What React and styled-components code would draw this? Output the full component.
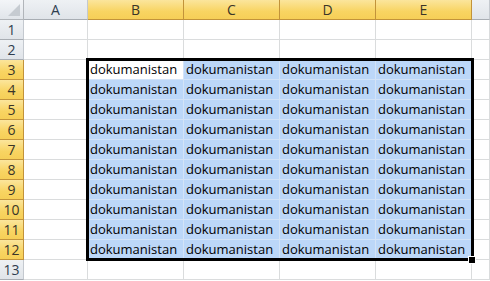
import React from 'react';
import styled, { createGlobalStyle } from 'styled-components';

const GlobalStyle = createGlobalStyle`
  html, body {
    margin: 0;
    padding: 0;
    background: #ffffff;
  }
  * {
    box-sizing: border-box;
  }
`;

const Sheet = styled.div`
  position: relative;
  display: grid;
  grid-template-columns: 24px 64px repeat(4, 96px) 1fr;
  grid-auto-rows: 20px;
  width: 490px;
  font-family: "Open Sans", "Liberation Sans", sans-serif;
  overflow: hidden;
`;

const Corner = styled.div`
  position: relative;
  background: linear-gradient(#f3f5f8, #e1e5ea);
  border-right: 1px solid #b1b5ba;
  border-bottom: 1px solid #b1b5ba;

  &::after {
    content: '';
    position: absolute;
    right: 3px;
    bottom: 3px;
    width: 0;
    height: 0;
    border-left: 12px solid transparent;
    border-bottom: 12px solid #c6cbd1;
  }
`;

const Head = styled.div`
  display: flex;
  align-items: center;
  justify-content: center;
  font-size: 14px;
  color: ${(p) => (p.$hl ? '#3a3528' : '#2f3d4f')};
  background: ${(p) =>
    p.$hl
      ? 'linear-gradient(#fbe59c, #f8d462 60%, #f6cf57)'
      : 'linear-gradient(#eef1f4, #e0e4e9)'};
  border-right: 1px solid ${(p) => (p.$hl ? '#c2933a' : '#c4c9cf')};
  border-bottom: 1px solid ${(p) => (p.$hl ? '#c2933a' : '#a8adb3')};
`;

const Cell = styled.div`
  display: flex;
  align-items: flex-end;
  padding: 0 0 1px 2px;
  font-size: 13px;
  line-height: 17px;
  color: #000;
  white-space: nowrap;
  overflow: hidden;
  background: ${(p) => (p.$sel && !p.$active ? '#bcd7f8' : '#ffffff')};
  border-right: 1px solid ${(p) => (p.$sel ? '#d3e3f7' : '#dadcdd')};
  border-bottom: 1px solid ${(p) => (p.$sel ? '#d3e3f7' : '#dadcdd')};
`;

const Selection = styled.div`
  position: absolute;
  left: 86px;
  top: 58px;
  width: 388px;
  height: 203px;
  border: 3px solid #000;
  pointer-events: none;
`;

const FillHandle = styled.div`
  position: absolute;
  left: 469px;
  top: 257px;
  width: 6px;
  height: 6px;
  background: #000;
  outline: 1px solid #fff;
`;

const columns = ['A', 'B', 'C', 'D', 'E', ''];
const rowCount = 13;
const WORD = 'dokumanistan';

const inSelection = (row, col) => row >= 3 && row <= 12 && col >= 1 && col <= 4;

export default function App() {
  return (
    <>
      <GlobalStyle />
      <Sheet>
        <Corner />
        {columns.map((c, i) => (
          <Head key={'h' + i} $hl={i >= 1 && i <= 4}>
            {c}
          </Head>
        ))}
        {Array.from({ length: rowCount }, (_, r) => {
          const row = r + 1;
          return (
            <React.Fragment key={row}>
              <Head $hl={row >= 3 && row <= 12}>{row}</Head>
              {columns.map((_, col) => {
                const sel = inSelection(row, col);
                return (
                  <Cell key={col} $sel={sel} $active={row === 3 && col === 1}>
                    {sel ? WORD : ''}
                  </Cell>
                );
              })}
            </React.Fragment>
          );
        })}
        <Selection />
        <FillHandle />
      </Sheet>
    </>
  );
}
